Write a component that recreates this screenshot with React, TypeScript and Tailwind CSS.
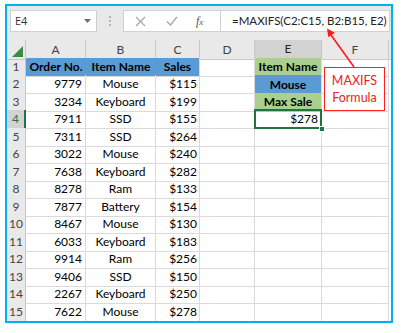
const data: [string, string, string][] = [
  ["9779", "Mouse", "$115"],
  ["3234", "Keyboard", "$199"],
  ["7911", "SSD", "$155"],
  ["7311", "SSD", "$264"],
  ["3022", "Mouse", "$240"],
  ["7638", "Keyboard", "$282"],
  ["8278", "Ram", "$133"],
  ["7877", "Battery", "$154"],
  ["8467", "Mouse", "$130"],
  ["6033", "Keyboard", "$183"],
  ["9914", "Ram", "$256"],
  ["9406", "SSD", "$150"],
  ["2267", "Keyboard", "$250"],
  ["7622", "Mouse", "$278"],
];

const rowGrid =
  "grid grid-cols-[19px_60px_70px_44px_55px_67px_67px_2px] h-[17.5px]";
const cell = "border-r border-b border-[#dadada] flex items-center";

function ColHeader({ label, active }: { label: string; active?: boolean }) {
  return (
    <div
      className={
        active
          ? "bg-[#d2d2d2] border-r border-[#c4c4c4] border-b-2 border-b-[#217346] flex items-center justify-center text-[#262626]"
          : "bg-[#e9e9e9] border-r border-b border-[#c8c8c8] flex items-center justify-center text-[#444]"
      }
    >
      {label}
    </div>
  );
}

function RowHeader({ n, active }: { n: number; active?: boolean }) {
  return (
    <div
      className={
        active
          ? "bg-[#d2d2d2] border-b border-[#c4c4c4] border-r-2 border-r-[#217346] flex items-center justify-center text-[#217346]"
          : "bg-[#e9e9e9] border-r border-b border-[#c8c8c8] flex items-center justify-center text-[#444]"
      }
    >
      {n}
    </div>
  );
}

function ECell({ row }: { row: number }) {
  if (row === 1)
    return (
      <div className="bg-[#a9d08e] border-r border-[#dadada] flex items-center justify-center font-bold">
        Item Name
      </div>
    );
  if (row === 2)
    return (
      <div className="bg-[#5b9bd5] border-r border-[#dadada] flex items-center justify-center font-bold">
        Mouse
      </div>
    );
  if (row === 3)
    return (
      <div className="bg-[#a9d08e] border-r border-[#dadada] flex items-center justify-center font-bold">
        Max Sale
      </div>
    );
  if (row === 4)
    return (
      <div className="relative flex items-center justify-end pr-[3px] border-r border-b border-[#dadada]">
        $278
        <div className="absolute -top-[1px] -left-[1px] -right-[1px] -bottom-[1px] border-2 border-[#217346]" />
        <div className="absolute -bottom-[4px] -right-[4px] w-[6px] h-[6px] bg-[#217346] border border-white" />
      </div>
    );
  return <div className={cell} />;
}

export default function App() {
  return (
    <div className="relative w-[401px] h-[333px] bg-white pt-[4px] pl-[5px] font-['Lato',sans-serif] text-[12px] text-black">
      <div className="w-[388px] h-[319px] border-2 border-[#00b0f0] bg-white flex flex-col overflow-hidden">
        {/* Formula bar */}
        <div className="h-[34px] bg-[#e9e9e9] flex items-start pt-[4px] shrink-0">
          <div className="ml-[3px] w-[87px] h-[22px] bg-white border border-[#d0d0d0] flex items-center justify-between pl-[4px] pr-[5px] font-['Open_Sans',sans-serif] text-[11px] text-[#333]">
            <span>E4</span>
            <svg width="7" height="4" viewBox="0 0 7 4">
              <polygon points="0,0 7,0 3.5,4" fill="#707070" />
            </svg>
          </div>
          <div className="w-[26px] h-[22px] flex flex-col items-center justify-center gap-[2px]">
            <span className="w-[2px] h-[2px] bg-[#b4b4b4]" />
            <span className="w-[2px] h-[2px] bg-[#b4b4b4]" />
            <span className="w-[2px] h-[2px] bg-[#b4b4b4]" />
          </div>
          <div className="w-[97px] h-[22px] bg-white border border-[#d0d0d0] border-r-0 flex items-center">
            <svg className="ml-[11px]" width="11" height="11" viewBox="0 0 11 11">
              <path d="M1 1 L10 10 M10 1 L1 10" stroke="#a6a6a6" strokeWidth="1.2" fill="none" />
            </svg>
            <svg className="ml-[20px]" width="12" height="10" viewBox="0 0 12 10">
              <path d="M1 5.5 L4.5 9 L11 1" stroke="#a6a6a6" strokeWidth="1.3" fill="none" />
            </svg>
            <span className="ml-[18px] font-['Liberation_Serif',serif] italic text-[12px] text-[#555] leading-none">
              f<span className="text-[9px]">x</span>
            </span>
          </div>
          <div className="w-[170px] h-[22px] bg-white border border-[#d0d0d0] flex items-center pl-[11px] text-[11.5px] text-[#222] whitespace-nowrap overflow-hidden">
            =MAXIFS(C2:C15, B2:B15, E2)
          </div>
        </div>

        {/* Column headers */}
        <div className={rowGrid}>
          <div className="bg-[#e9e9e9] border-r border-b border-[#c8c8c8] relative">
            <svg className="absolute right-[2px] bottom-[2px]" width="11" height="11" viewBox="0 0 11 11">
              <polygon points="11,0 11,11 0,11" fill="#3c8a48" />
            </svg>
          </div>
          <ColHeader label="A" />
          <ColHeader label="B" />
          <ColHeader label="C" />
          <ColHeader label="D" />
          <ColHeader label="E" active />
          <ColHeader label="F" />
          <div className="bg-[#e9e9e9] border-b border-[#c8c8c8]" />
        </div>

        {/* Row 1 */}
        <div className={rowGrid}>
          <RowHeader n={1} />
          <div className="bg-[#5b9bd5] border-b border-[#dadada] flex items-center justify-center font-bold">
            Order No.
          </div>
          <div className="bg-[#5b9bd5] border-b border-[#dadada] flex items-center justify-center font-bold">
            Item Name
          </div>
          <div className="bg-[#5b9bd5] border-r border-b border-[#dadada] flex items-center justify-center font-bold">
            Sales
          </div>
          <div className={cell} />
          <ECell row={1} />
          <div className={cell} />
          <div />
        </div>

        {data.map(([a, b, c], i) => {
          const n = i + 2;
          return (
            <div key={n} className={rowGrid}>
              <RowHeader n={n} active={n === 4} />
              <div className={`${cell} justify-end pr-[3px]`}>{a}</div>
              <div className={`${cell} justify-center`}>{b}</div>
              <div className={`${cell} justify-end pr-[2px]`}>{c}</div>
              <div className={cell} />
              <ECell row={n} />
              <div className={cell} />
              <div />
            </div>
          );
        })}
      </div>

      {/* Callout */}
      <div className="absolute left-[324px] top-[67px] w-[61px] h-[44px] bg-white border border-[#ff2020] flex flex-col items-center justify-center text-[#ee2222] text-[12.5px] leading-[17px]">
        <span>MAXIFS</span>
        <span>Formula</span>
      </div>
      <svg className="absolute left-0 top-0 pointer-events-none" width="401" height="333">
        <line x1="354" y1="67" x2="331" y2="35" stroke="#ff1a1a" strokeWidth="1.6" />
        <polygon points="327,28.5 334.9,32.75 328.3,37.35" fill="#ff1a1a" />
      </svg>
    </div>
  );
}
